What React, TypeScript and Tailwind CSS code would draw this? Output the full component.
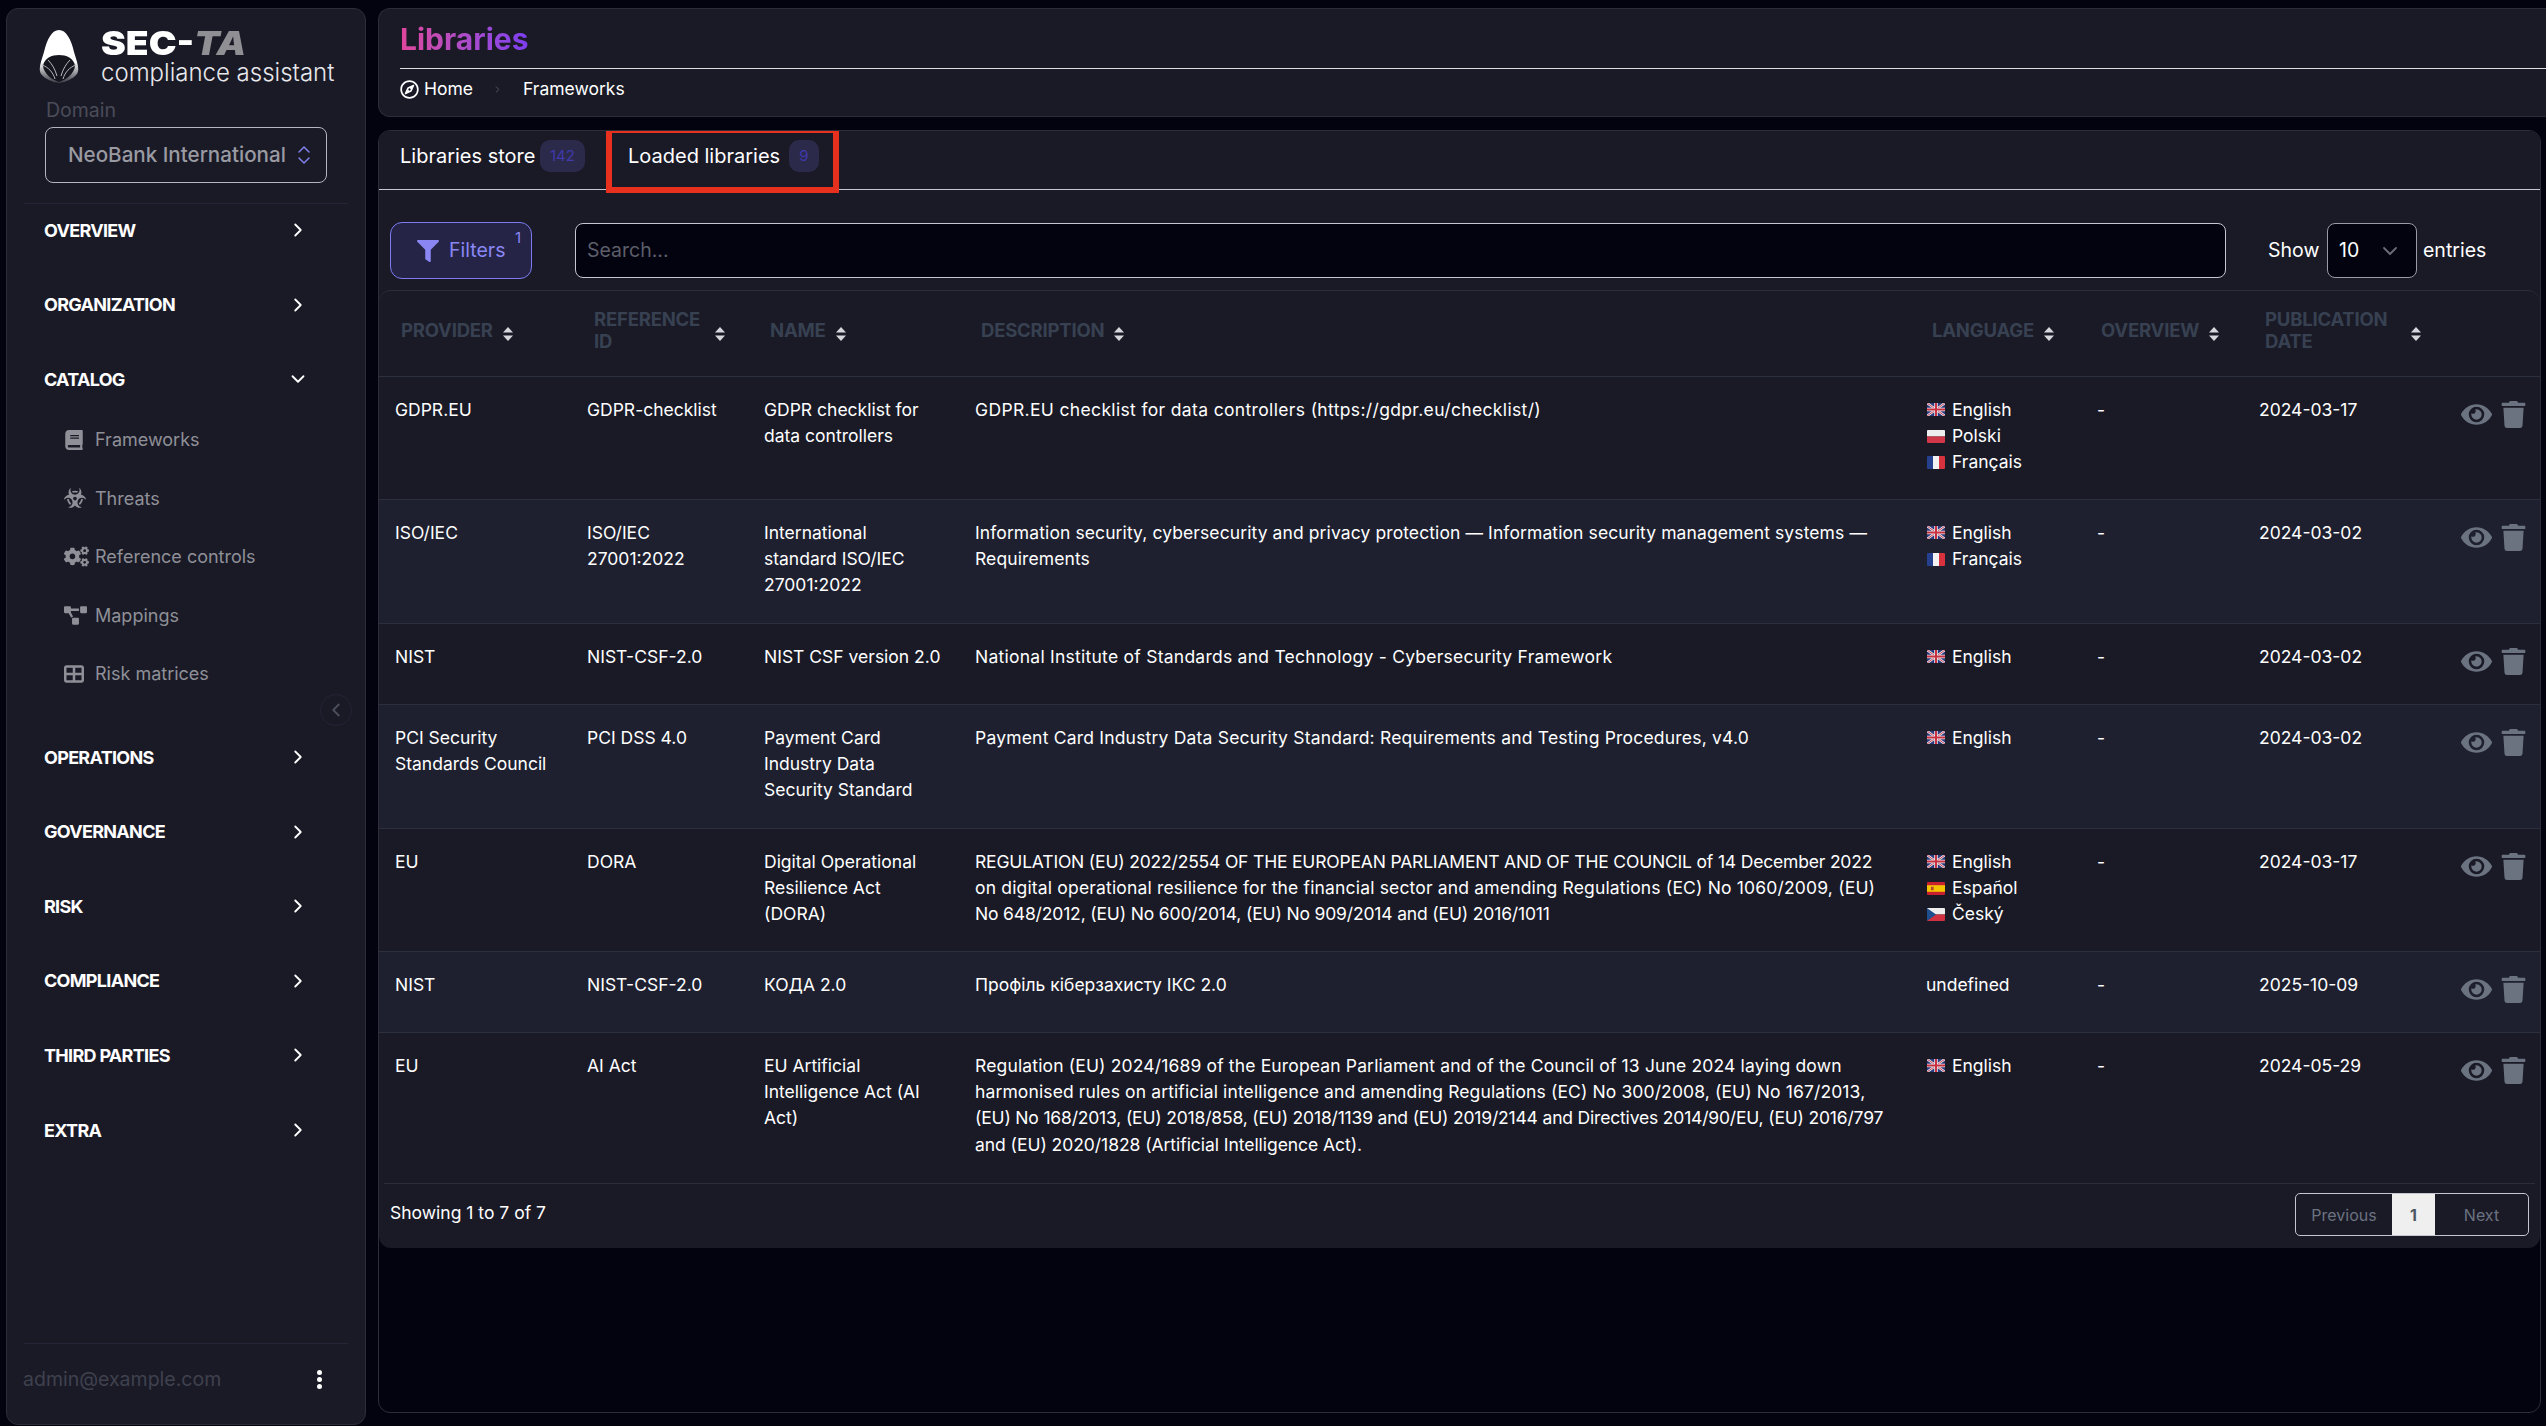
import { ChevronDown, ChevronLeft, ChevronRight, ChevronsUpDown } from "lucide-react";
import { FaBiohazard, FaBook, FaCogs, FaEye, FaFilter, FaProjectDiagram, FaRegCompass, FaTrash } from "react-icons/fa";
import { FaTableCellsLarge } from "react-icons/fa6";

type Lang = { flag: string; name: string };

type Row = {
  provider: string[];
  ref: string[];
  name: string[];
  desc: { text: string; track: string }[];
  langs: Lang[];
  date: string;
  h: string;
};

const en = { flag: "gb", name: "English" };
const fr = { flag: "fr", name: "Français" };

// tracking per line: Inter runs a bit off the original font on caps and digits
const rows: Row[] = [
  {
    provider: ["GDPR.EU"],
    ref: ["GDPR-checklist"],
    name: ["GDPR checklist for", "data controllers"],
    desc: [
      {
        text: "GDPR.EU checklist for data controllers (https://gdpr.eu/checklist/)",
        track: "tracking-[0.35px]",
      },
    ],
    langs: [en, { flag: "pl", name: "Polski" }, fr],
    date: "2024-03-17",
    h: "h-[123px]",
  },
  {
    provider: ["ISO/IEC"],
    ref: ["ISO/IEC", "27001:2022"],
    name: ["International", "standard ISO/IEC", "27001:2022"],
    desc: [
      {
        text: "Information security, cybersecurity and privacy protection — Information security management systems —",
        track: "tracking-[0.1px]",
      },
      { text: "Requirements", track: "tracking-[0.1px]" },
    ],
    langs: [en, fr],
    date: "2024-03-02",
    h: "h-[124px]",
  },
  {
    provider: ["NIST"],
    ref: ["NIST-CSF-2.0"],
    name: ["NIST CSF version 2.0"],
    desc: [
      {
        text: "National Institute of Standards and Technology - Cybersecurity Framework",
        track: "tracking-[0.25px]",
      },
    ],
    langs: [en],
    date: "2024-03-02",
    h: "h-[81px]",
  },
  {
    provider: ["PCI Security", "Standards Council"],
    ref: ["PCI DSS 4.0"],
    name: ["Payment Card", "Industry Data", "Security Standard"],
    desc: [
      {
        text: "Payment Card Industry Data Security Standard: Requirements and Testing Procedures, v4.0",
        track: "tracking-[0.2px]",
      },
    ],
    langs: [en],
    date: "2024-03-02",
    h: "h-[124px]",
  },
  {
    provider: ["EU"],
    ref: ["DORA"],
    name: ["Digital Operational", "Resilience Act", "(DORA)"],
    desc: [
      {
        text: "REGULATION (EU) 2022/2554 OF THE EUROPEAN PARLIAMENT AND OF THE COUNCIL of 14 December 2022",
        track: "tracking-[-0.18px]",
      },
      {
        text: "on digital operational resilience for the financial sector and amending Regulations (EC) No 1060/2009, (EU)",
        track: "tracking-[0.17px]",
      },
      {
        text: "No 648/2012, (EU) No 600/2014, (EU) No 909/2014 and (EU) 2016/1011",
        track: "tracking-[-0.16px]",
      },
    ],
    langs: [en, { flag: "es", name: "Español" }, { flag: "cz", name: "Český" }],
    date: "2024-03-17",
    h: "h-[123px]",
  },
  {
    provider: ["NIST"],
    ref: ["NIST-CSF-2.0"],
    name: ["КОДА 2.0"],
    desc: [{ text: "Профіль кіберзахисту ІКС 2.0", track: "tracking-normal" }],
    langs: [],
    date: "2025-10-09",
    h: "h-[81px]",
  },
  {
    provider: ["EU"],
    ref: ["AI Act"],
    name: ["EU Artificial", "Intelligence Act (AI", "Act)"],
    desc: [
      {
        text: "Regulation (EU) 2024/1689 of the European Parliament and of the Council of 13 June 2024 laying down",
        track: "tracking-[0.15px]",
      },
      {
        text: "harmonised rules on artificial intelligence and amending Regulations (EC) No 300/2008, (EU) No 167/2013,",
        track: "tracking-[0.12px]",
      },
      {
        text: "(EU) No 168/2013, (EU) 2018/858, (EU) 2018/1139 and (EU) 2019/2144 and Directives 2014/90/EU, (EU) 2016/797",
        track: "tracking-[-0.18px]",
      },
      { text: "and (EU) 2020/1828 (Artificial Intelligence Act).", track: "tracking-[-0.05px]" },
    ],
    langs: [en],
    date: "2024-05-29",
    h: "h-[151px]",
  },
];

const navTop = ["OVERVIEW", "ORGANIZATION"];
const navBottom = ["OPERATIONS", "GOVERNANCE", "RISK", "COMPLIANCE", "THIRD PARTIES", "EXTRA"];

const catalog = [
  { label: "Frameworks", icon: <FaBook size={20} /> },
  { label: "Threats", icon: <FaBiohazard size={22} /> },
  { label: "Reference controls", icon: <FaCogs size={25} /> },
  { label: "Mappings", icon: <FaProjectDiagram size={23} /> },
  { label: "Risk matrices", icon: <FaTableCellsLarge size={20} /> },
];

const headers = [
  { lines: ["PROVIDER"], pl: "pl-[22px]", gap: "gap-[10px]" },
  { lines: ["REFERENCE", "ID"], pl: "pl-[22px]", gap: "gap-[15px]" },
  { lines: ["NAME"], pl: "pl-[22px]", gap: "gap-[10px]" },
  { lines: ["DESCRIPTION"], pl: "pl-[22px]", gap: "gap-[10px]" },
  { lines: ["LANGUAGE"], pl: "pl-[21px]", gap: "gap-[10px]" },
  { lines: ["OVERVIEW"], pl: "pl-[20px]", gap: "gap-[10px]" },
  { lines: ["PUBLICATION", "DATE"], pl: "pl-[21px]", gap: "gap-[24px]" },
];

function Flag({ code }: { code: string }) {
  return (
    <svg width="18" height="13" viewBox="0 0 18 13" className="shrink-0 rounded-[1px]">
      {code === "gb" && (
        <>
          <rect width="18" height="13" fill="#2b3a7a" />
          <path d="M0 0L18 13M18 0L0 13" stroke="#e8e8ee" strokeWidth="2.4" />
          <path d="M0 0L18 13M18 0L0 13" stroke="#c8303f" strokeWidth="0.9" />
          <path d="M9 0V13M0 6.5H18" stroke="#e8e8ee" strokeWidth="3.6" />
          <path d="M9 0V13M0 6.5H18" stroke="#c8303f" strokeWidth="2" />
        </>
      )}
      {code === "pl" && (
        <>
          <rect width="18" height="6.5" fill="#eeeeee" />
          <rect y="6.5" width="18" height="6.5" fill="#d0384a" />
        </>
      )}
      {code === "fr" && (
        <>
          <rect width="6" height="13" fill="#24408f" />
          <rect x="6" width="6" height="13" fill="#f2f2f2" />
          <rect x="12" width="6" height="13" fill="#d8323f" />
        </>
      )}
      {code === "es" && (
        <>
          <rect width="18" height="13" fill="#c8202f" />
          <rect y="3.2" width="18" height="6.6" fill="#f5c400" />
          <rect x="4" y="4.8" width="2.6" height="3.4" fill="#b5442a" />
        </>
      )}
      {code === "cz" && (
        <>
          <rect width="18" height="6.5" fill="#eeeeee" />
          <rect y="6.5" width="18" height="6.5" fill="#d0303f" />
          <path d="M0 0L9 6.5L0 13Z" fill="#1f4e8f" />
        </>
      )}
    </svg>
  );
}

function SortIcon() {
  return (
    <svg width="10" height="14" viewBox="0 0 10 14" className="mt-[6px] shrink-0">
      <path d="M5 0L10 5.5H0Z" fill="#d5d7dd" />
      <path d="M5 14L0 8.5H10Z" fill="#d5d7dd" />
    </svg>
  );
}

function Logo() {
  return (
    <svg width="40" height="53" viewBox="0 0 40 53" className="shrink-0">
      <defs>
        <linearGradient id="hood" x1="0" y1="0" x2="0" y2="1">
          <stop offset="0.6" stopColor="#ffffff" />
          <stop offset="1" stopColor="#3a3a44" />
        </linearGradient>
      </defs>
      <path
        d="M20 0C27 0 32 9 35 22C38 32 41 39 38 44C34 49 27 52 20 53C13 52 6 49 2 44C-1 39 2 32 5 22C8 9 13 0 20 0Z"
        fill="url(#hood)"
      />
      <path d="M4 36C5 28 13 25 20 25C27 25 35 28 36 36C35 44 27 50 20 52C13 50 5 44 4 36Z" fill="#16161f" />
      <path
        d="M3 35C9 37 14 42 16 49M9 30C13 34 16 39 18 46M37 35C31 37 26 42 24 49M31 30C27 34 24 39 22 46"
        stroke="#b5b5ba"
        strokeWidth="1"
        fill="none"
      />
    </svg>
  );
}

function Sidebar() {
  return (
    <aside className="flex h-[1417px] w-[360px] shrink-0 flex-col rounded-[12px] border border-[#2c2d38] bg-[#1a1a27]">
      <div className="flex items-start gap-[22px] pl-[32px] pt-[21px]">
        <Logo />
        <div className="-mt-[3px]">
          <div className="origin-left scale-x-[1.13] text-[33px] leading-[33px] font-black text-white">
            SEC-<span className="text-[#8f8f94] italic">TA</span>
          </div>
          <div className="-mt-[1px] text-[24px] leading-[28px] font-light text-[#e8e8ec]">
            compliance assistant
          </div>
        </div>
      </div>
      <div className="mt-[12px] ml-[39px] text-[19.5px] leading-[22px] text-[#4a4c58]">Domain</div>
      <div className="mx-[38px] mt-[6px] flex h-[56px] w-[282px] items-center justify-between rounded-[8px] border border-[#b4b5c0] pr-[10px] pl-[22px] text-[20.6px] font-medium text-[#9a9ba2]">
        <span className="whitespace-nowrap">NeoBank International</span>
        <ChevronsUpDown size={24} strokeWidth={1.5} className="shrink-0 text-[#7f80e8]" />
      </div>
      <div className="mx-[17px] mt-[20px] h-px bg-[#252538]" />

      <nav className="-mt-[11px] flex flex-1 flex-col">
        {navTop.map((n) => (
          <NavItem key={n} label={n} />
        ))}
        <NavItem label="CATALOG" open />
        <ul className="-mt-[6px] flex flex-col">
          {catalog.map((c) => (
            <li key={c.label} className="flex h-[58.4px] items-center pl-[57px] text-[18px] text-[#8f9097]">
              <span className="flex w-[31px] shrink-0 justify-start">{c.icon}</span>
              {c.label}
            </li>
          ))}
        </ul>
        <div className="relative h-[17px]">
          <span className="absolute top-[-9px] right-[13px] flex h-[32px] w-[32px] items-center justify-center rounded-full border border-[#232336] text-[#4b4e5c]">
            <ChevronLeft size={22} strokeWidth={2} />
          </span>
        </div>
        {navBottom.map((n) => (
          <NavItem key={n} label={n} />
        ))}
      </nav>

      <div className="mx-[17px] h-px bg-[#252538]" />
      <div className="flex h-[80px] items-center justify-between pr-[43px] pb-[9px] pl-[16px]">
        <span className="text-[19.5px] text-[#3f414d]">admin@example.com</span>
        <span className="flex flex-col gap-[2px]">
          <i className="h-[5px] w-[5px] rounded-full bg-white" />
          <i className="h-[5px] w-[5px] rounded-full bg-white" />
          <i className="h-[5px] w-[5px] rounded-full bg-white" />
        </span>
      </div>
    </aside>
  );
}

function NavItem({ label, open }: { label: string; open?: boolean }) {
  return (
    <div className="flex h-[74.6px] shrink-0 items-center justify-between pr-[56px] pl-[37px] text-[18px] font-bold tracking-[-0.7px] text-white">
      {label}
      {open ? <ChevronDown size={22} strokeWidth={2} /> : <ChevronRight size={22} strokeWidth={2} />}
    </div>
  );
}

function Header() {
  return (
    <header className="h-[109px] w-full rounded-l-[12px] border-y border-l border-[#2c2d38] bg-[#1a1a27]">
      <div className="ml-[21px] flex h-[59px] items-end pb-[9px]">
        <h1 className="bg-linear-to-r from-[#e0459c] to-[#7d3df0] bg-clip-text text-[30px] leading-[40px] font-bold text-transparent">
          Libraries
        </h1>
      </div>
      <div className="ml-[21px] h-px bg-[#dfe0e6]" />
      <div className="ml-[21px] flex h-[41px] items-center text-[17.5px] text-white">
        <FaRegCompass size={19} />
        <span className="ml-[5px]">Home</span>
        <ChevronRight size={11} className="mr-[20px] ml-[19px] text-[#565865]" />
        <span>Frameworks</span>
      </div>
    </header>
  );
}

function Tabs() {
  return (
    <div className="flex h-[59px] items-start border-b border-[#c5c6d0] pl-[21px] text-[20px] text-white">
      <div className="-mt-[1px] flex h-[52px] w-[186px] items-center">
        <span className="w-[134px] whitespace-nowrap">Libraries store</span>
        <span className="ml-[6px] flex h-[32px] w-[45px] items-center justify-center rounded-[10px] bg-[#2c2a4a] text-[15px] text-[#3f39ab]">
          142
        </span>
      </div>
      <div className="relative -mt-[1px] ml-[42px] flex h-[52px] items-center">
        <span className="w-[155px] whitespace-nowrap">Loaded libraries</span>
        <span className="ml-[6px] flex h-[32px] w-[30px] items-center justify-center rounded-[10px] bg-[#2c2a4a] text-[15px] text-[#3f39ab]">
          9
        </span>
        <span className="absolute top-[-3px] left-[-22px] h-[66px] w-[233px] border-[6px] border-[#e8301f]" />
      </div>
    </div>
  );
}

function Toolbar() {
  return (
    <div className="flex items-center pt-[32px] pl-[11px]">
      <button className="relative flex h-[57px] w-[142px] items-center rounded-[12px] border border-[#7c7cf0] bg-[#252447] pl-[26px] text-[19.5px] text-[#8a87f5]">
        <FaFilter size={22} />
        <span className="ml-[10px]">Filters</span>
        <span className="absolute top-[5px] right-[10px] text-[15px] leading-[20px]">1</span>
      </button>
      <div className="ml-[43px] flex h-[55px] w-[1651px] items-center rounded-[8px] border border-[#c5c6d0] bg-[#03030f] pl-[11px] text-[19.5px] text-[#5c5e6a]">
        Search...
      </div>
      <span className="ml-[42px] w-[53px] text-[19.5px] text-white">Show</span>
      <div className="ml-[6px] flex h-[55px] w-[90px] items-center justify-between rounded-[8px] border border-[#9a9ba6] bg-[#03030f] pr-[14px] pl-[11px] text-[19.5px] text-white">
        10
        <ChevronDown size={24} strokeWidth={1.8} className="text-[#6b6d78]" />
      </div>
      <span className="ml-[6px] text-[19.5px] text-white">entries</span>
    </div>
  );
}

function LibTable() {
  return (
    <div className="mt-[11px] rounded-t-[12px] border-t border-[#2c2d38]">
      <table className="w-full table-fixed border-collapse text-[17.5px] leading-[26.4px] text-white">
        <colgroup>
          <col className="w-[193px]" />
          <col className="w-[176px]" />
          <col className="w-[211px]" />
          <col className="w-[952px]" />
          <col className="w-[170px]" />
          <col className="w-[163px]" />
          <col className="w-[202px]" />
          <col />
        </colgroup>
        <thead>
          <tr className="h-[85px] border-b border-[#2c2f3d]">
            {headers.map((h) => (
              <th key={h.lines[0]} className={`p-0 text-left align-middle ${h.pl}`}>
                <div
                  className={`-mt-[5px] flex items-center text-[18.5px] leading-[21.5px] font-bold tracking-[-0.2px] text-[#374151] ${h.gap}`}
                >
                  <span>
                    {h.lines.map((l) => (
                      <span key={l} className="block">
                        {l}
                      </span>
                    ))}
                  </span>
                  <SortIcon />
                </div>
              </th>
            ))}
            <th />
          </tr>
        </thead>
        <tbody>
          {rows.map((r, i) => (
            <tr
              key={i}
              className={`border-b border-[#2c2f3d] align-top last:border-b-0 ${r.h} ${
                i % 2 === 1 ? "bg-[#1e2030]" : "bg-[#1a1a27]"
              }`}
            >
              <td className="pt-[20px] pl-[16px]">
                {r.provider.map((l) => (
                  <div key={l} className="whitespace-nowrap">
                    {l}
                  </div>
                ))}
              </td>
              <td className="pt-[20px] pl-[15px]">
                {r.ref.map((l) => (
                  <div key={l} className="whitespace-nowrap">
                    {l}
                  </div>
                ))}
              </td>
              <td className="pt-[20px] pl-[16px]">
                {r.name.map((l) => (
                  <div key={l} className="whitespace-nowrap">
                    {l}
                  </div>
                ))}
              </td>
              <td className="pt-[20px] pl-[16px]">
                {r.desc.map((l) => (
                  <div key={l.text} className={`whitespace-nowrap ${l.track}`}>
                    {l.text}
                  </div>
                ))}
              </td>
              <td className="pt-[20px] pl-[15px]">
                {r.langs.length === 0 && "undefined"}
                {r.langs.map((l) => (
                  <div key={l.name} className="flex items-center gap-[7px] pl-[1px]">
                    <Flag code={l.flag} />
                    {l.name}
                  </div>
                ))}
              </td>
              <td className="pt-[20px] pl-[16px]">-</td>
              <td className="pt-[20px] pl-[15px]">{r.date}</td>
              <td className="pt-[22px] pl-[15px]">
                <div className="flex items-center gap-[8px] text-[#6b7280]">
                  <FaEye size={31} />
                  <FaTrash size={27} />
                </div>
              </td>
            </tr>
          ))}
        </tbody>
      </table>
    </div>
  );
}

function TableFooter() {
  return (
    <div className="mx-[5px] flex h-[65px] items-center justify-between border-t border-[#2c2d38] pr-[6px] pl-[6px] text-[17.5px] text-white">
      <span className="-mt-[5px]">Showing 1 to 7 of 7</span>
      <div className="-mt-[3px] flex h-[43px] w-[234px] overflow-hidden rounded-[5px] border border-[#c5c6d0] text-[16px]">
        <span className="flex w-[96px] items-center justify-center text-[#6b7280]">Previous</span>
        <span className="flex w-[43px] items-center justify-center bg-[#efefef] font-bold text-[#4b5563]">1</span>
        <span className="flex flex-1 items-center justify-center text-[#6b7280]">Next</span>
      </div>
    </div>
  );
}

export default function App() {
  return (
    <div className="flex h-[1426px] w-[2546px] overflow-hidden bg-[#03030f] pt-[8px] pl-[6px] font-['Inter','Noto_Sans',sans-serif]">
      <Sidebar />
      <main className="ml-[12px] flex flex-1 flex-col">
        <Header />
        <section className="mt-[13px] h-[1283px] w-[2163px] overflow-hidden rounded-[12px] border border-[#2c2d38]">
          <div className="rounded-b-[12px] bg-[#1a1a27]">
            <Tabs />
            <Toolbar />
            <LibTable />
            <TableFooter />
          </div>
        </section>
      </main>
    </div>
  );
}
